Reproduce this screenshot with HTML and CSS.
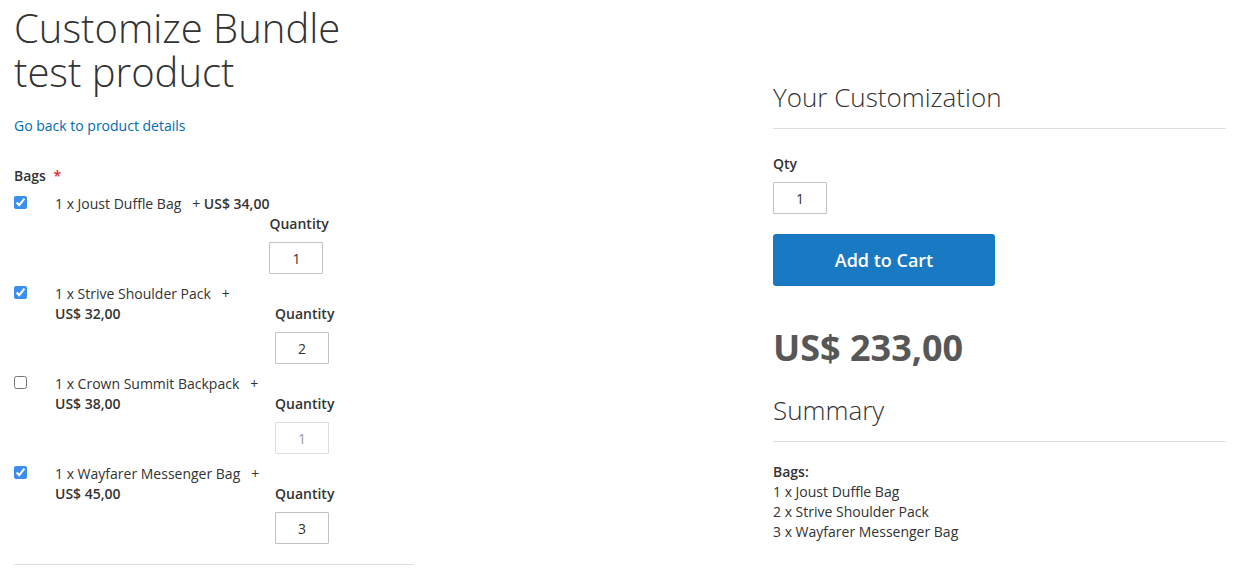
FILE: index.html
```html
<!DOCTYPE html>
<html lang="en">
<head>
<meta charset="utf-8">
<title>Customize Bundle test product</title>
<link rel="stylesheet" href="styles.css">
</head>
<body>
<div class="page">
  <div class="options">
    <h1 class="page-title">Customize Bundle test product</h1>
    <a class="back-link" href="#">Go back to product details</a>
    <div class="field-label">Bags <span class="req">*</span></div>
    <div class="option-list">
      <div class="option">
        <input class="check" type="checkbox" checked>
        <div class="opt-label">1 x Joust Duffle Bag &nbsp; + <b>US$&nbsp;34,00</b></div>
        <div class="qty-field">
          <div class="qty-label">Quantity</div>
          <input class="qty-input" type="text" value="1">
        </div>
      </div>
      <div class="option">
        <input class="check" type="checkbox" checked>
        <div class="opt-label">1 x Strive Shoulder Pack &nbsp; + <b>US$&nbsp;32,00</b></div>
        <div class="qty-field">
          <div class="qty-label">Quantity</div>
          <input class="qty-input" type="text" value="2">
        </div>
      </div>
      <div class="option">
        <input class="check" type="checkbox">
        <div class="opt-label">1 x Crown Summit Backpack &nbsp; + <b>US$&nbsp;38,00</b></div>
        <div class="qty-field">
          <div class="qty-label">Quantity</div>
          <input class="qty-input disabled" type="text" value="1" disabled>
        </div>
      </div>
      <div class="option">
        <input class="check" type="checkbox" checked>
        <div class="opt-label">1 x Wayfarer Messenger Bag &nbsp; + <b>US$&nbsp;45,00</b></div>
        <div class="qty-field">
          <div class="qty-label">Quantity</div>
          <input class="qty-input" type="text" value="3">
        </div>
      </div>
    </div>
    <div class="options-end"></div>
  </div>

  <div class="summary">
    <h2 class="subtitle">Your Customization</h2>
    <div class="qty-box">
      <div class="qty-title">Qty</div>
      <input class="qty-input main-qty" type="text" value="1">
    </div>
    <button class="add-cart" type="button">Add to Cart</button>
    <div class="total">US$ 233,00</div>
    <h2 class="subtitle summary-title">Summary</h2>
    <div class="summary-list">
      <div class="summary-head">Bags:</div>
      <div>1 x Joust Duffle Bag</div>
      <div>2 x Strive Shoulder Pack</div>
      <div>3 x Wayfarer Messenger Bag</div>
    </div>
  </div>
</div>
</body>
</html>
```

FILE: styles.css
```css
* { box-sizing: border-box; }

body {
  margin: 0;
  font-family: "Open Sans", "Liberation Sans", sans-serif;
  font-size: 14px;
  line-height: 20px;
  color: #333;
  background: #fff;
}

.page {
  display: flex;
  justify-content: space-between;
  padding: 0 16px 0 14px;
}

.options {
  width: 400px;
}

.page-title {
  margin: 6px 0 0;
  max-width: 360px;
  font-size: 40px;
  line-height: 44px;
  font-weight: 300;
  color: #333;
}

.back-link {
  display: block;
  margin-top: 22px;
  color: #006bb4;
  text-decoration: none;
}

.field-label {
  margin-top: 30px;
  font-weight: 600;
}

.req {
  color: #e02b27;
  margin-left: 4px;
}

.option-list {
  margin-top: 8px;
}

.option {
  display: flex;
  align-items: flex-start;
  padding-bottom: 10px;
}

.check {
  flex: 0 0 auto;
  width: 13px;
  height: 13px;
  margin: 2px 28px 0 0;
  accent-color: #3b8eed;
}

.opt-label {
  flex: 0 1 auto;
  max-width: 220px;
}

.opt-label b {
  font-weight: 600;
}

.qty-field {
  padding-top: 20px;
}

.qty-label {
  font-weight: 600;
  margin-bottom: 8px;
}

.qty-input {
  display: block;
  width: 54px;
  height: 32px;
  border: 1px solid #c2c2c2;
  border-radius: 1px;
  background: #fff;
  font-family: "Open Sans", "Liberation Sans", sans-serif;
  font-size: 14px;
  color: #333;
  text-align: center;
  padding: 0 6px;
}

.qty-input.disabled {
  color: #999;
  border-color: #ddd;
}

.options-end {
  border-top: 1px solid #e0e0e0;
  margin-top: 10px;
}

.summary {
  width: 453px;
  padding-top: 77px;
}

.subtitle {
  margin: 0;
  font-size: 26px;
  line-height: 40px;
  font-weight: 300;
  color: #333;
  padding-bottom: 11px;
  border-bottom: 1px solid #e0e0e0;
}

.qty-box {
  margin-top: 25px;
}

.qty-title {
  font-weight: 600;
  margin-bottom: 8px;
}

.add-cart {
  display: block;
  margin-top: 20px;
  width: 222px;
  height: 52px;
  border: 0;
  border-radius: 3px;
  background: #1979c3;
  color: #fff;
  font-family: "Open Sans", "Liberation Sans", sans-serif;
  font-size: 18px;
  font-weight: 600;
}

.total {
  margin-top: 40px;
  font-size: 36px;
  line-height: 44px;
  font-weight: 700;
  color: #575757;
}

.summary-title {
  margin-top: 20px;
}

.summary-list {
  margin-top: 20px;
}

.summary-head {
  font-weight: 600;
}
```
